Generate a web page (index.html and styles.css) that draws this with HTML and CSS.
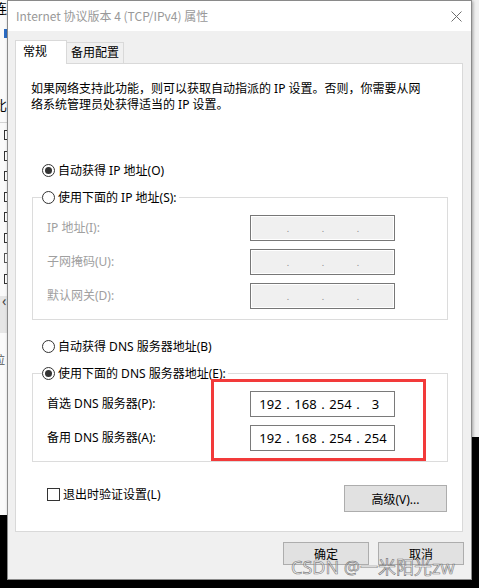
FILE: index.html
```html
<!DOCTYPE html>
<html>
  <head>
    <meta charset="UTF-8">
    <title>Internet 协议版本 4 (TCP/IPv4) 属性</title>
    <link rel="stylesheet" href="styles.css">
  </head>
  <body>
    <!-- windows behind the dialog -->
    <div class="bgwin bgwin-left">
      <span class="bg-char bg-char-top">连</span>
      <span class="bg-mark"></span>
      <span class="bg-line"></span>
      <span class="bg-char bg-char-mid">比</span>
      <div class="bg-checks">
        <span class="bg-check on"></span>
        <span class="bg-check on"></span>
        <span class="bg-check on"></span>
        <span class="bg-check on"></span>
        <span class="bg-check on"></span>
        <span class="bg-check on"></span>
        <span class="bg-check"></span>
        <span class="bg-check on"></span>
      </div>
      <div class="bg-band">&lsaquo;</div>
      <span class="bg-char bg-char-low">拉</span>
    </div>
    <div class="bgwin bgwin-right"></div>

    <div class="dialog">
      <div class="titlebar">
        <span class="title">Internet 协议版本 4 (TCP/IPv4) 属性</span>
        <svg class="close" width="11" height="11" viewBox="0 0 11 11">
          <path d="M0.5 0.5 L10.5 10.5 M10.5 0.5 L0.5 10.5" stroke="#6e6e6e" stroke-width="1" fill="none"/>
        </svg>
      </div>

      <div class="content">
        <div class="tabs">
          <div class="tab active">常规</div>
          <div class="tab">备用配置</div>
        </div>

        <div class="panel">
          <p class="intro">如果网络支持此功能，则可以获取自动指派的 IP 设置。否则，你需要从网<br>络系统管理员处获得适当的 IP 设置。</p>

          <div class="radio-row first">
            <span class="radio checked"></span>
            <span>自动获得 IP 地址(O)</span>
          </div>

          <fieldset class="group">
            <legend>
              <span class="radio"></span>
              <span>使用下面的 IP 地址(S):</span>
            </legend>
            <div class="fields">
              <label class="disabled">IP 地址(I):</label>
              <div class="ip off"><span class="oct"></span><span class="dot">.</span><span class="oct"></span><span class="dot">.</span><span class="oct"></span><span class="dot">.</span><span class="oct"></span></div>
              <label class="disabled">子网掩码(U):</label>
              <div class="ip off"><span class="oct"></span><span class="dot">.</span><span class="oct"></span><span class="dot">.</span><span class="oct"></span><span class="dot">.</span><span class="oct"></span></div>
              <label class="disabled">默认网关(D):</label>
              <div class="ip off"><span class="oct"></span><span class="dot">.</span><span class="oct"></span><span class="dot">.</span><span class="oct"></span><span class="dot">.</span><span class="oct"></span></div>
            </div>
          </fieldset>

          <div class="radio-row dns">
            <span class="radio"></span>
            <span>自动获得 DNS 服务器地址(B)</span>
          </div>

          <fieldset class="group">
            <legend>
              <span class="radio checked"></span>
              <span>使用下面的 DNS 服务器地址(E):</span>
            </legend>
            <div class="fields">
              <label>首选 DNS 服务器(P):</label>
              <div class="ip"><span class="oct">192</span><span class="dot">.</span><span class="oct">168</span><span class="dot">.</span><span class="oct">254</span><span class="dot">.</span><span class="oct">3</span></div>
              <label>备用 DNS 服务器(A):</label>
              <div class="ip"><span class="oct">192</span><span class="dot">.</span><span class="oct">168</span><span class="dot">.</span><span class="oct">254</span><span class="dot">.</span><span class="oct">254</span></div>
            </div>
          </fieldset>

          <div class="bottom-row">
            <div class="check-row">
              <span class="checkbox"></span>
              <span>退出时验证设置(L)</span>
            </div>
            <button class="btn advanced">高级(V)...</button>
          </div>
        </div>

        <div class="actions">
          <button class="btn">确定</button>
          <button class="btn">取消</button>
        </div>
      </div>
    </div>

    <!-- annotation + watermark on top of the screenshot -->
    <div class="highlight"></div>
    <div class="watermark">CSDN @一米阳光zw</div>
  </body>
</html>
```

FILE: styles.css
```css
* { box-sizing: border-box; }
body {
  margin: 0;
  width: 479px;
  height: 588px;
  overflow: hidden;
  position: relative;
  background: #000;
  font-family: "Noto Sans", "Noto Sans CJK SC", sans-serif;
  font-size: 12px;
  color: #000;
}

/* background windows */
.bgwin { position: absolute; top: 0; background: #fafafa; }
.bgwin-left { left: 0; width: 60px; height: 515px; }
.bgwin-right { left: 420px; width: 59px; height: 437px; background: #f0f0f0; }
.bg-char { position: absolute; left: -6px; font-size: 13px; line-height: 16px; }
.bg-char-top { top: 0; }
.bg-char-mid { top: 97px; }
.bg-char-low { top: 352px; font-size: 11px; color: #555; }
.bg-mark { position: absolute; left: 4px; top: 29px; width: 3px; height: 9px; background: #2b6cc4; }
.bg-line { position: absolute; left: 0; top: 122px; width: 60px; height: 1px; background: #d4d4d4; }
.bg-checks { position: absolute; left: 4px; top: 130px; display: flex; flex-direction: column; gap: 10.5px; }
.bg-check { width: 10px; height: 10px; border: 1px solid #555; background: #fff; }
.bg-check.on { border-color: #333; }
.bg-band { position: absolute; left: 0; top: 296px; width: 60px; height: 37px; background: #e6e6e6; color: #444; font-size: 14px; line-height: 10px; padding-left: 2px; }

/* dialog */
.dialog {
  position: absolute;
  left: 7px;
  top: 0;
  width: 465px;
  height: 580px;
  background: #f0f0f0;
  border: 1px solid #8a8a8a;
  box-shadow: 1px 1px 3px rgba(0, 0, 0, 0.35);
}
.titlebar {
  height: 30px;
  background: #fff;
  display: flex;
  align-items: center;
  justify-content: space-between;
  padding: 0 9px 0 8px;
}
.title {
  color: #999;
  line-height: 16px;
  font-family: "Noto Sans CJK SC", sans-serif;
}

.content { padding: 9px 7px 0 7px; }

.tabs { display: flex; align-items: flex-end; height: 23px; }
.tab {
  width: 57px;
  height: 21px;
  padding: 0 0 0 4px;
  border: 1px solid #d9d9d9;
  border-bottom: none;
  border-left: none;
  line-height: 20px;
  background: #f0f0f0;
}
.tab.active {
  position: relative;
  z-index: 1;
  width: 52px;
  height: 24px;
  margin-bottom: -1px;
  border-left: 1px solid #d9d9d9;
  background: #fff;
  padding: 0 0 0 7px;
  line-height: 22px;
}

.panel {
  width: 448px;
  height: 469px;
  background: #fff;
  border: 1px solid #d9d9d9;
}
.intro { margin: 17px 0 0 15px; line-height: 16px; }

.radio-row { display: flex; align-items: center; gap: 3px; height: 16px; margin-left: 26px; }
.radio-row.first { margin-top: 49px; }
.radio-row.dns { margin-top: 18px; }

.radio {
  width: 13px;
  height: 13px;
  border: 1px solid #333;
  border-radius: 50%;
  background: #fff;
  display: inline-flex;
  align-items: center;
  justify-content: center;
  flex: none;
}
.radio.checked::after {
  content: "";
  width: 7px;
  height: 7px;
  border-radius: 50%;
  background: #333;
}

.group {
  margin: 11px 14px 0 16px;
  padding: 10px 52px 10px 14px;
  border: 1px solid #dcdcdc;
  min-width: 0;
}
.group legend {
  display: flex;
  align-items: center;
  gap: 3px;
  height: 16px;
  padding: 0 2px 0 0;
  margin-left: -5px;
}

.fields {
  display: grid;
  grid-template-columns: 1fr 145px;
  row-gap: 8px;
  align-items: center;
}
.fields label { line-height: 16px; }
.disabled { color: #a0a0a0; }

.ip {
  height: 26px;
  border: 1px solid #7a7a7a;
  background: #fff;
  display: flex;
  align-items: center;
  padding-left: 7px;
  font-size: 13px;
}
.ip.off { background: #f0f0f0; box-shadow: inset 0 0 0 1px #fff; border-color: #777; }
.ip.off .dot { color: #888; font-size: 9px; }
.oct { width: 25px; text-align: center; }
.dot { width: 10px; text-align: center; }

.bottom-row {
  display: flex;
  justify-content: space-between;
  align-items: flex-start;
  margin: 23px 15px 0 31px;
}
.check-row { display: flex; align-items: center; gap: 3px; height: 16px; margin-top: 1px; }
.checkbox { width: 13px; height: 13px; border: 1px solid #333; background: #fff; }

.btn {
  font-family: inherit;
  font-size: 12px;
  color: #000;
  background: #e1e1e1;
  border: 1px solid #adadad;
  padding: 0;
  width: 86px;
  height: 23px;
}
.btn.advanced { width: 103px; height: 27px; }

.actions { display: flex; justify-content: flex-end; gap: 9px; margin-top: 10px; }

/* red annotation box and site watermark */
.highlight {
  position: absolute;
  left: 211px;
  top: 379px;
  width: 215px;
  height: 82px;
  border: 3px solid #f23a3a;
}
.watermark {
  position: absolute;
  left: 291px;
  top: 555px;
  font-family: "Noto Sans", "Noto Sans CJK SC", sans-serif;
  font-size: 18px;
  line-height: 24px;
  color: rgba(255, 255, 255, 0.55);
  -webkit-text-stroke: 0.7px rgba(90, 90, 90, 0.75);
}
```
